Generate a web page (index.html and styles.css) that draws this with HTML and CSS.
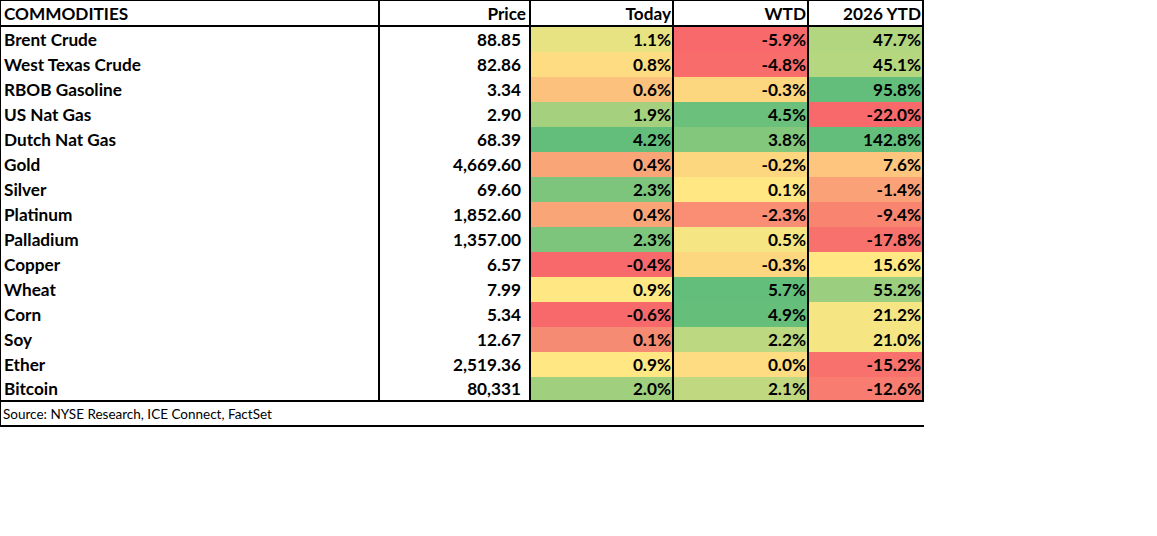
FILE: index.html
```html
<!DOCTYPE html>
<html lang="en">
<head>
<meta charset="utf-8">
<title>Commodities</title>
<link rel="stylesheet" href="styles.css">
</head>
<body>
<div class="sheet">
  <div class="grid">
    <div class="cell hd name">COMMODITIES</div>
    <div class="cell hd num">Price</div>
    <div class="cell hd pct">Today</div>
    <div class="cell hd pct">WTD</div>
    <div class="cell hd pct">2026 YTD</div>

    <div class="cell name">Brent Crude</div><div class="cell num">88.85</div><div class="cell pct" style="background:#E8E382">1.1%</div><div class="cell pct" style="background:#F8696B">-5.9%</div><div class="cell pct" style="background:#B2D680">47.7%</div>
    <div class="cell name">West Texas Crude</div><div class="cell num">82.86</div><div class="cell pct" style="background:#FEDC81">0.8%</div><div class="cell pct" style="background:#F86C6B">-4.8%</div><div class="cell pct" style="background:#B5D780">45.1%</div>
    <div class="cell name">RBOB Gasoline</div><div class="cell num">3.34</div><div class="cell pct" style="background:#FCC17C">0.6%</div><div class="cell pct" style="background:#FDD680">-0.3%</div><div class="cell pct" style="background:#63BE7B">95.8%</div>
    <div class="cell name">US Nat Gas</div><div class="cell num">2.90</div><div class="cell pct" style="background:#A5D17F">1.9%</div><div class="cell pct" style="background:#6BC07B">4.5%</div><div class="cell pct" style="background:#F8696B">-22.0%</div>
    <div class="cell name">Dutch Nat Gas</div><div class="cell num">68.39</div><div class="cell pct" style="background:#63BE7B">4.2%</div><div class="cell pct" style="background:#83C77C">3.8%</div><div class="cell pct" style="background:#63BE7B">142.8%</div>
    <div class="cell name">Gold</div><div class="cell num">4,669.60</div><div class="cell pct" style="background:#FAA578">0.4%</div><div class="cell pct" style="background:#FDD780">-0.2%</div><div class="cell pct" style="background:#FDC57D">7.6%</div>
    <div class="cell name">Silver</div><div class="cell num">69.60</div><div class="cell pct" style="background:#7DC57C">2.3%</div><div class="cell pct" style="background:#FFE784">0.1%</div><div class="cell pct" style="background:#FBA177">-1.4%</div>
    <div class="cell name">Platinum</div><div class="cell num">1,852.60</div><div class="cell pct" style="background:#FAA578">0.4%</div><div class="cell pct" style="background:#F98E75">-2.3%</div><div class="cell pct" style="background:#F98571">-9.4%</div>
    <div class="cell name">Palladium</div><div class="cell num">1,357.00</div><div class="cell pct" style="background:#7DC57C">2.3%</div><div class="cell pct" style="background:#F6E683">0.5%</div><div class="cell pct" style="background:#F8716D">-17.8%</div>
    <div class="cell name">Copper</div><div class="cell num">6.57</div><div class="cell pct" style="background:#F8696B">-0.4%</div><div class="cell pct" style="background:#FDD680">-0.3%</div><div class="cell pct" style="background:#FFE884">15.6%</div>
    <div class="cell name">Wheat</div><div class="cell num">7.99</div><div class="cell pct" style="background:#FFE884">0.9%</div><div class="cell pct" style="background:#63BE7B">5.7%</div><div class="cell pct" style="background:#9BCE7F">55.2%</div>
    <div class="cell name">Corn</div><div class="cell num">5.34</div><div class="cell pct" style="background:#F8696B">-0.6%</div><div class="cell pct" style="background:#65BF7B">4.9%</div><div class="cell pct" style="background:#F5E683">21.2%</div>
    <div class="cell name">Soy</div><div class="cell num">12.67</div><div class="cell pct" style="background:#F68B74">0.1%</div><div class="cell pct" style="background:#BCD881">2.2%</div><div class="cell pct" style="background:#F5E683">21.0%</div>
    <div class="cell name">Ether</div><div class="cell num">2,519.36</div><div class="cell pct" style="background:#FFE884">0.9%</div><div class="cell pct" style="background:#FEDC81">0.0%</div><div class="cell pct" style="background:#F8716D">-15.2%</div>
    <div class="cell name last">Bitcoin</div><div class="cell num last">80,331</div><div class="cell pct last" style="background:#A0D07E">2.0%</div><div class="cell pct last" style="background:#C0D981">2.1%</div><div class="cell pct last" style="background:#F87C6F">-12.6%</div>
  </div>
  <div class="source">Source: NYSE Research, ICE Connect, FactSet</div>
</div>
</body>
</html>
```
FILE: styles.css
```css
html, body {
  margin: 0;
  padding: 0;
  background: #ffffff;
}

.sheet {
  width: 924px;
  font-family: Lato, "Open Sans", sans-serif;
  color: #000000;
}

.grid {
  display: grid;
  grid-template-columns: 380px 151px 143px 135px 115px;
  grid-template-rows: 27px repeat(14, 25px) 25px;
}

.cell {
  box-sizing: border-box;
  border-right: 2px solid #000;
  font-weight: 700;
  font-size: 17.2px;
  line-height: 25px;
  white-space: nowrap;
  overflow: hidden;
}

.cell.name {
  border-left: 1px solid #000;
  padding-left: 3px;
  text-align: left;
}

.cell.num {
  text-align: right;
  padding-right: 8px;
}

.cell.pct {
  text-align: right;
  padding-right: 1px;
}

.cell.hd {
  border-top: 1px solid #000;
  border-bottom: 2px solid #000;
  line-height: 25px;
}

.cell.hd.num {
  padding-right: 3px;
}

.cell.last {
  border-bottom: 2px solid #000;
  line-height: 23px;
}

.source {
  box-sizing: border-box;
  height: 25px;
  border-left: 1px solid #000;
  border-bottom: 2px solid #000;
  padding-left: 2px;
  font-size: 13.5px;
  line-height: 24px;
  font-weight: 400;
}
```
